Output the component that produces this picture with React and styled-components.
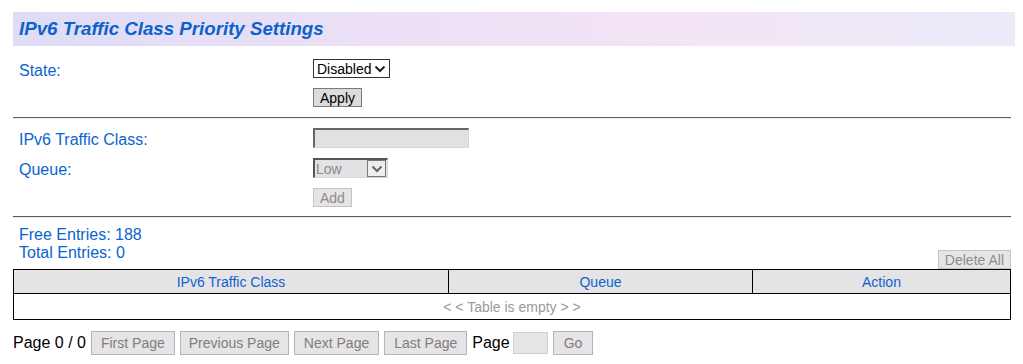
import styled, { createGlobalStyle } from "styled-components";

const GlobalStyle = createGlobalStyle`
  body {
    margin: 0;
    background: #fff;
    font-family: "Liberation Sans", Arial, sans-serif;
  }
`;

const Page = styled.div`
  width: 1002px;
  margin-left: 13px;
  padding-top: 12px;
`;

const Header = styled.div`
  height: 34px;
  display: flex;
  align-items: center;
  padding-left: 6px;
  background: linear-gradient(to right, #dedcf6 0%, #ebe0f6 35%, #f3e4f5 65%, #ecebf9 100%);
`;

const Title = styled.h1`
  margin: 0;
  font-size: 18.7px;
  font-weight: bold;
  font-style: italic;
  color: #0b62cc;
`;

const Content = styled.div`
  width: 998px;
`;

const Form = styled.div`
  display: grid;
  grid-template-columns: 300px 1fr;
  row-gap: 10px;
  padding: ${p => p.top}px 0 ${p => p.bottom}px;
`;

const Label = styled.div`
  padding-left: 6px;
  padding-top: 5px;
  font-size: 16px;
  line-height: 14px;
  white-space: nowrap;
  color: #0b63ce;
`;

const Cell = styled.div`
  display: flex;
  align-items: flex-start;
`;

const Divider = styled.div`
  height: 1px;
  background: #5c5a62;
  border-bottom: 1px solid #eef1ec;
`;

const Select = styled.div`
  box-sizing: border-box;
  width: ${p => p.width}px;
  height: ${p => p.height}px;
  display: flex;
  align-items: center;
  justify-content: space-between;
  font-size: 14px;
  color: ${p => (p.disabled ? "#8a8a8a" : "#000")};
  background: ${p => (p.disabled ? "#e3e1e3" : "#fff")};
  border: 1px solid #333;
  ${p => p.disabled && `
    border-top: 2px solid #555;
    border-left: 2px solid #555;
    border-right: 1px solid #d8d8d8;
    border-bottom: 1px solid #d8d8d8;
  `}
  padding-left: ${p => (p.disabled ? 1 : 3)}px;
`;

const ArrowBox = styled.div`
  box-sizing: border-box;
  width: 19px;
  height: 17px;
  display: flex;
  align-items: center;
  justify-content: center;
  border: 1px solid ${p => (p.disabled ? "#777" : "transparent")};
  background: ${p => (p.disabled ? "#eeeeee" : "transparent")};
  margin-right: 1px;
`;

const Chevron = ({ color }) => (
  <svg width="12" height="8" viewBox="0 0 12 8">
    <path d="M1.5 1.5 L6 6 L10.5 1.5" fill="none" stroke={color} strokeWidth="2" />
  </svg>
);

const TextBox = styled.div`
  box-sizing: border-box;
  width: ${p => p.width}px;
  height: ${p => p.height}px;
  background: #e2e0e2;
  border-top: 2px solid #666;
  border-left: 2px solid #666;
  border-right: 1px solid #d6d6d6;
  border-bottom: 1px solid #d6d6d6;
`;

const SmallButton = styled.button`
  box-sizing: border-box;
  height: 19px;
  padding: 0 6px;
  font-family: inherit;
  font-size: 14px;
  line-height: 16px;
  color: ${p => (p.disabled ? "#8c8c8c" : "#000")};
  background: ${p => (p.disabled ? "#e6e4e6" : "#dcdcdc")};
  border: 1px solid ${p => (p.disabled ? "#c4c4c4" : "#7a7a7a")};
  border-radius: 0;
`;

const EntriesRow = styled.div`
  display: flex;
  justify-content: space-between;
  align-items: flex-end;
  padding-top: 8px;
`;

const Entries = styled.div`
  padding-left: 6px;
  padding-bottom: 7px;
  font-size: 16px;
  line-height: 18px;
  color: #0b63ce;
`;

const Table = styled.table`
  width: 998px;
  border-collapse: collapse;
  border: 1px solid #000;
  font-size: 14px;
`;

const Th = styled.th`
  width: ${p => p.width}px;
  height: 23px;
  padding: 0;
  font-weight: normal;
  color: #0b63ce;
  background: #e6e3e6;
  border: 1px solid #000;
`;

const Td = styled.td`
  height: 25px;
  padding: 0;
  text-align: center;
  color: #9a9a9a;
`;

const Pager = styled.div`
  display: flex;
  align-items: center;
  gap: 5px;
  margin-top: 11px;
  height: 24px;
`;

const PagerText = styled.span`
  font-size: 16px;
  color: #000;
`;

const PagerButton = styled.button`
  box-sizing: border-box;
  height: 24px;
  padding: 0 ${p => p.pad || 9}px;
  font-family: inherit;
  font-size: 14px;
  color: #7e7e7e;
  background: #e6e4e6;
  border: 1px solid #b4b4b4;
  border-radius: 0;
`;

const PageInput = styled.div`
  box-sizing: border-box;
  width: 35px;
  height: 22px;
  margin-left: -2px;
  background: #e4e6e4;
  border: 1px solid #cfcfcf;
`;

export default function App() {
  return (
    <>
      <GlobalStyle />
      <Page>
        <Header>
          <Title>IPv6 Traffic Class Priority Settings</Title>
        </Header>
        <Content>
          <Form top={13} bottom={10}>
            <Label>State:</Label>
            <Cell>
              <Select width={77} height={19}>
                <span>Disabled</span>
                <ArrowBox>
                  <Chevron color="#222" />
                </ArrowBox>
              </Select>
            </Cell>
            <Label />
            <Cell>
              <SmallButton>Apply</SmallButton>
            </Cell>
          </Form>
          <Divider />
          <Form top={9} bottom={9}>
            <Label>IPv6 Traffic Class:</Label>
            <Cell>
              <TextBox width={156} height={20} />
            </Cell>
            <Label>Queue:</Label>
            <Cell>
              <Select width={75} height={20} disabled>
                <span>Low</span>
                <ArrowBox disabled>
                  <Chevron color="#666" />
                </ArrowBox>
              </Select>
            </Cell>
            <Label />
            <Cell>
              <SmallButton disabled>Add</SmallButton>
            </Cell>
          </Form>
          <Divider />
          <EntriesRow>
            <Entries>
              <div>Free Entries: 188</div>
              <div>Total Entries: 0</div>
            </Entries>
            <SmallButton disabled>Delete All</SmallButton>
          </EntriesRow>
          <Table>
            <thead>
              <tr>
                <Th width={434}>IPv6 Traffic Class</Th>
                <Th width={303}>Queue</Th>
                <Th>Action</Th>
              </tr>
            </thead>
            <tbody>
              <tr>
                <Td colSpan={3}>&lt; &lt; Table is empty &gt; &gt;</Td>
              </tr>
            </tbody>
          </Table>
          <Pager>
            <PagerText>Page 0 / 0</PagerText>
            <PagerButton>First Page</PagerButton>
            <PagerButton pad={8}>Previous Page</PagerButton>
            <PagerButton>Next Page</PagerButton>
            <PagerButton>Last Page</PagerButton>
            <PagerText>Page</PagerText>
            <PageInput />
            <PagerButton pad={10}>Go</PagerButton>
          </Pager>
        </Content>
      </Page>
    </>
  );
}
